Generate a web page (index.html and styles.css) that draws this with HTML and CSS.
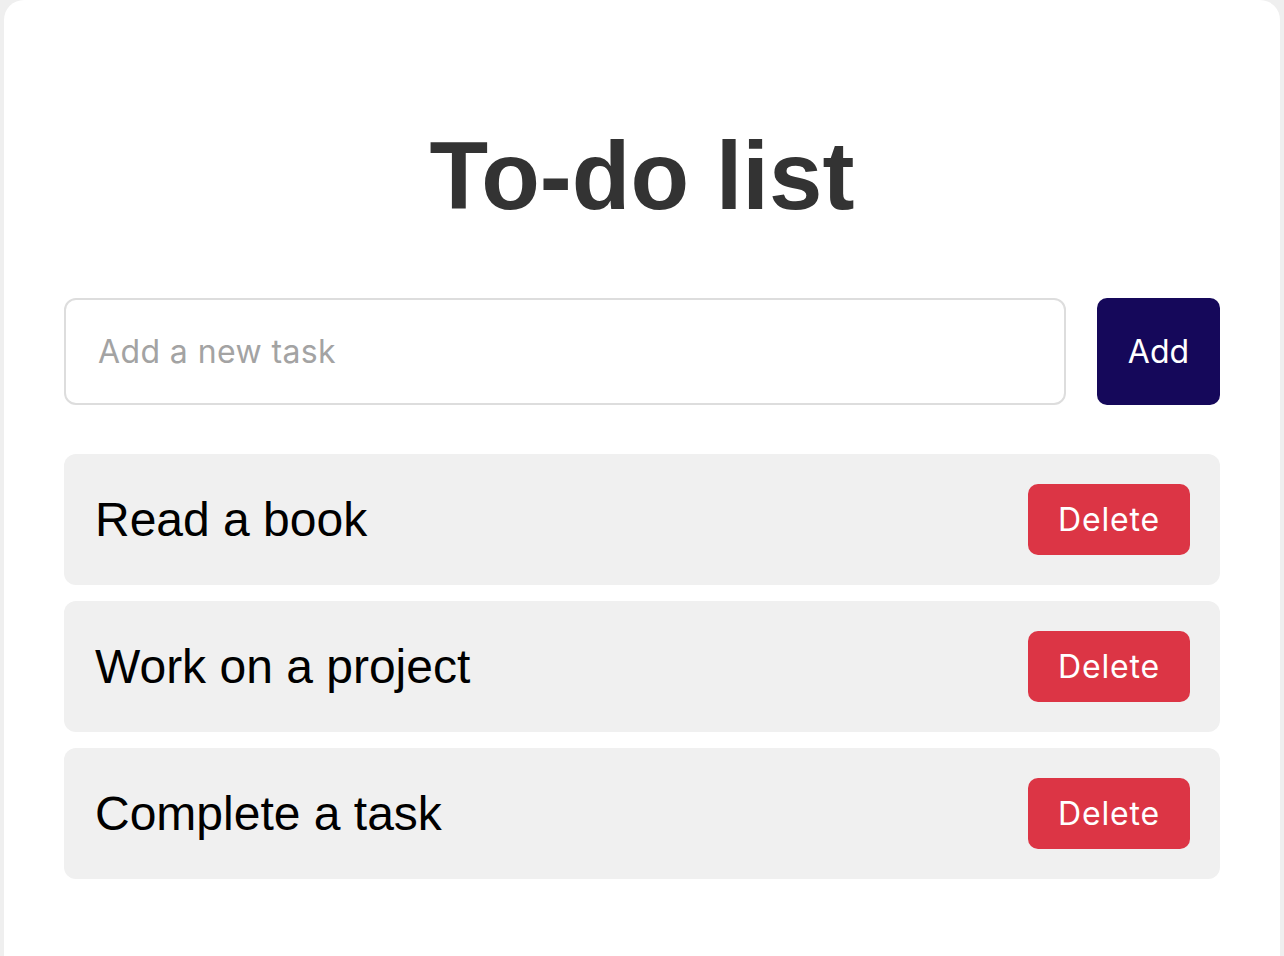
FILE: index.html
```html
<!DOCTYPE html>
<html lang="en">
<head>
<meta charset="utf-8">
<title>To-do list</title>
<link rel="stylesheet" href="styles.css">
</head>
<body>
<div class="card">
  <h1 class="title">To-do list</h1>
  <div class="add-row">
    <input class="task-input" type="text" placeholder="Add a new task">
    <button class="add-btn">Add</button>
  </div>
  <ul class="task-list">
    <li class="task"><span class="task-text">Read a book</span><button class="del-btn">Delete</button></li>
    <li class="task"><span class="task-text">Work on a project</span><button class="del-btn">Delete</button></li>
    <li class="task"><span class="task-text">Complete a task</span><button class="del-btn">Delete</button></li>
  </ul>
</div>
</body>
</html>
```

FILE: styles.css
```css
html, body {
  margin: 0;
  padding: 0;
  background: #efefef;
  height: 100%;
  overflow: hidden;
}
body {
  padding: 0 4px;
  font-family: "Liberation Sans", Arial, sans-serif;
}
.card {
  background: #ffffff;
  border-radius: 20px 20px 0 0;
  padding: 0 60px;
  min-height: 1100px;
  box-sizing: border-box;
  overflow: hidden;
}
.title {
  margin: 122px 0 69px;
  font-family: "Liberation Sans", Arial, sans-serif;
  font-weight: 700;
  font-size: 96px;
  line-height: 107px;
  text-align: center;
  color: #333333;
}
.add-row {
  display: flex;
  gap: 31px;
  margin-bottom: 49px;
}
.task-input {
  flex: 1;
  height: 107px;
  box-sizing: border-box;
  border: 2px solid #dddddd;
  border-radius: 12px;
  padding: 0 32px;
  font-family: Inter, "Noto Sans", sans-serif;
  font-size: 32px;
  letter-spacing: 0.4px;
  color: #333;
  outline: none;
  background: #fff;
}
.task-input::placeholder {
  color: #a3a3a3;
}
.add-btn {
  width: 123px;
  height: 107px;
  border: none;
  border-radius: 10px;
  background: #15085a;
  color: #ffffff;
  font-family: Inter, "Noto Sans", sans-serif;
  font-size: 32px;
  padding: 0;
}
.task-list {
  list-style: none;
  margin: 0;
  padding: 0;
  display: flex;
  flex-direction: column;
  gap: 16px;
}
.task {
  display: flex;
  align-items: center;
  justify-content: space-between;
  background: #f0f0f0;
  border-radius: 12px;
  padding: 30px 30px 30px 31px;
}
.task-text {
  font-family: "Liberation Sans", Arial, sans-serif;
  font-size: 48px;
  color: #000000;
}
.del-btn {
  width: 162px;
  height: 71px;
  border: none;
  border-radius: 10px;
  background: #dc3545;
  color: #ffffff;
  font-family: Inter, "Noto Sans", sans-serif;
  font-size: 32px;
  letter-spacing: 0.8px;
  padding: 0;
}
```
